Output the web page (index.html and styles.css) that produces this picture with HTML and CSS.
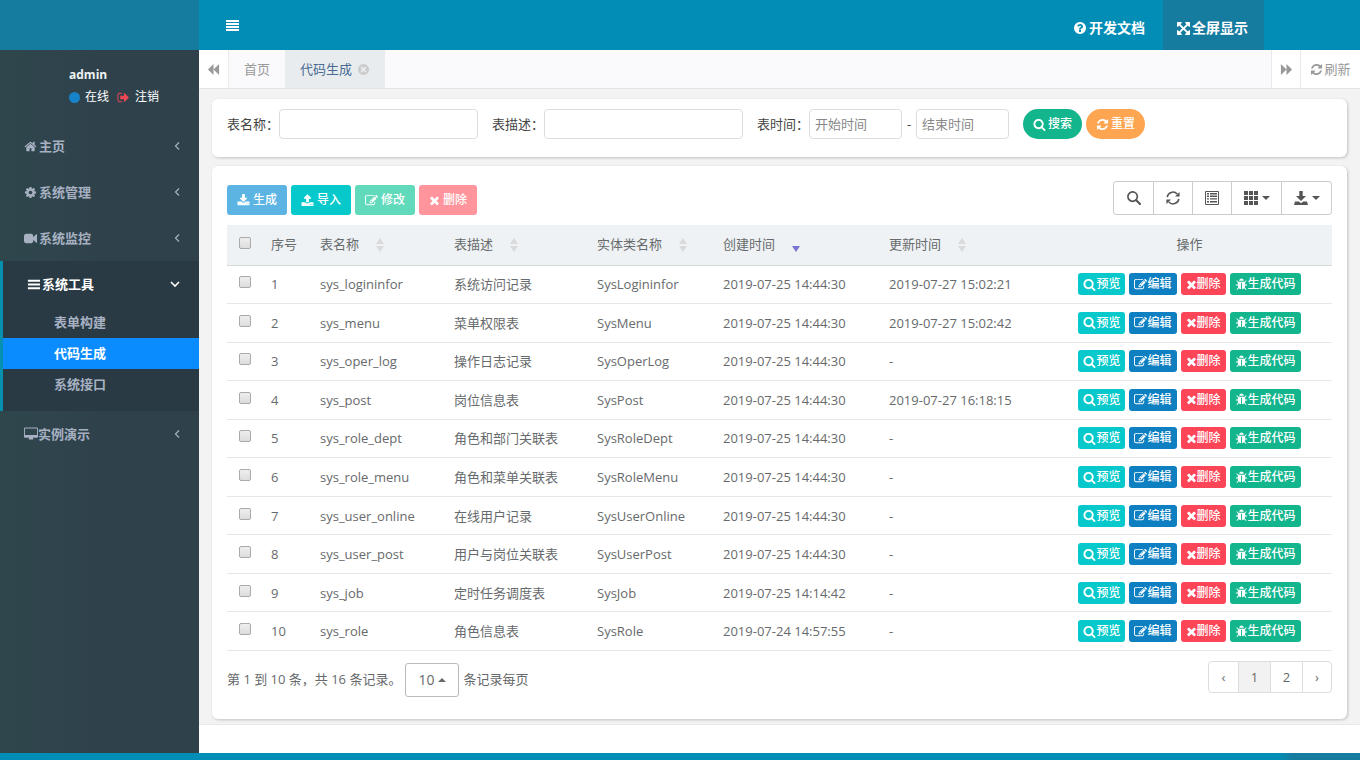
FILE: index.html
```
<!DOCTYPE html>
<html lang="zh-CN">
<head>
  <meta charset="UTF-8" />
  <meta name="viewport" content="width=device-width, initial-scale=1.0" />
  <title>代码生成</title>
  <link rel="stylesheet" href="styles.css">
</head>
<body>
  <!-- 图标 -->
  <svg class="sprite" aria-hidden="true">
    <symbol id="i-home" viewBox="0 0 1792 1792"><path d="M1472 992v480q0 26-19 45t-45 19h-384v-384h-256v384h-384q-26 0-45-19t-19-45v-480q0-1 .5-3t.5-3l575-474 575 474q1 2 1 6zm223-69l-62 74q-8 9-21 11h-3q-13 0-21-7l-692-577-692 577q-12 8-24 7-13-2-21-11l-62-74q-8-10-7-23.5t11-21.5l719-599q32-26 76-26t76 26l244 204v-195q0-14 9-23t23-9h192q14 0 23 9t9 23v408l219 182q10 8 11 21.5t-7 23.5z"/></symbol>
    <symbol id="i-gear" viewBox="0 0 1792 1792"><path d="M1152 896q0-106-75-181t-181-75-181 75-75 181 75 181 181 75 181-75 75-181zm512-109v222q0 12-8 23t-20 13l-185 28q-19 54-39 91 35 50 107 138 10 12 10 25t-9 23q-27 37-99 108t-94 71q-12 0-26-9l-138-108q-44 23-91 38-16 136-29 186-7 28-36 28h-222q-14 0-24.5-8.5t-11.5-21.5l-28-184q-49-16-90-37l-141 107q-10 9-25 9-14 0-25-11-126-114-165-168-7-10-7-23 0-12 8-23 15-21 51-66.5t54-70.5q-27-50-41-99l-183-27q-13-2-21-12.5t-8-23.5v-222q0-12 8-23t19-13l186-28q14-46 39-92-40-57-107-138-10-12-10-24 0-10 9-23 26-36 98.5-107.5t94.5-71.5q13 0 26 10l138 107q44-23 91-38 16-136 29-186 7-28 36-28h222q14 0 24.5 8.5t11.5 21.5l28 184q49 16 90 37l142-107q9-9 24-9 13 0 25 10 129 119 165 170 7 8 7 22 0 12-8 23-15 21-51 66.5t-54 70.5q26 50 41 98l183 28q13 2 21 12.5t8 23.5z"/></symbol>
    <symbol id="i-video" viewBox="0 0 1792 1792"><path d="M1792 352v1088q0 42-39 59-13 5-25 5-27 0-45-19l-403-403v166q0 119-84.5 203.5t-203.5 84.5h-704q-119 0-203.5-84.5t-84.5-203.5v-704q0-119 84.5-203.5t203.5-84.5h704q119 0 203.5 84.5t84.5 203.5v165l403-402q18-19 45-19 12 0 25 5 39 17 39 59z"/></symbol>
    <symbol id="i-bars" viewBox="0 0 14 14"><path d="M1 2h13v2H1zM1 6h13v2H1zM1 10h13v2H1z"/></symbol>
    <symbol id="i-align" viewBox="0 0 14 14"><path d="M1 2h13v2H1zM1 5h13v2H1zM1 8h13v2H1zM1 11h13v2H1z"/></symbol>
    <symbol id="i-desktop" viewBox="-64 0 1920 1792"><path d="M1728 992v-832q0-13-9.5-22.5t-22.5-9.5h-1600q-13 0-22.5 9.5t-9.5 22.5v832q0 13 9.5 22.5t22.5 9.5h1600q13 0 22.5-9.5t9.5-22.5zm128-832v1088q0 66-47 113t-113 47h-544q0 37 16 77.5t32 71 16 43.5q0 26-19 45t-45 19h-512q-26 0-45-19t-19-45q0-14 16-44t32-70 16-78h-544q-66 0-113-47t-47-113v-1088q0-66 47-113t113-47h1600q66 0 113 47t47 113z"/></symbol>
    <symbol id="i-search" viewBox="0 0 1792 1792"><path d="M1216 832q0-185-131.5-316.5t-316.5-131.5-316.5 131.5-131.5 316.5 131.5 316.5 316.5 131.5 316.5-131.5 131.5-316.5zm512 832q0 52-38 90t-90 38q-54 0-90-38l-343-342q-179 124-399 124-143 0-273.5-55.5t-225-150-150-225-55.5-273.5 55.5-273.5 150-225 225-150 273.5-55.5 273.5 55.5 225 150 150 225 55.5 273.5q0 220-124 399l343 343q37 37 37 90z"/></symbol>
    <symbol id="i-refresh" viewBox="0 0 1792 1792"><path d="M1639 1056q0 5-1 7-64 268-268 434.5t-478 166.5q-146 0-282.5-55t-243.5-157l-129 129q-19 19-45 19t-45-19-19-45v-448q0-26 19-45t45-19h448q26 0 45 19t19 45-19 45l-137 137q71 66 161 102t187 36q134 0 250-65t186-179q11-17 53-117 8-23 30-23h192q13 0 22.5 9.5t9.5 22.5zm25-800v448q0 26-19 45t-45 19h-448q-26 0-45-19t-19-45 19-45l138-138q-148-137-349-137-134 0-250 65t-186 179q-11 17-53 117-8 23-30 23h-199q-13 0-22.5-9.5t-9.5-22.5v-7q65-268 270-434.5t480-166.5q146 0 284 55.5t245 156.5l130-129q19-19 45-19t45 19 19 45z"/></symbol>
    <symbol id="i-edit" viewBox="0 0 1792 1792"><path d="M888 1184l116-116-152-152-116 116v56h96v96h56zm440-720q-16-16-33 1l-350 350q-17 17-1 33t33-1l350-350q17-17 1-33zm80 594v190q0 119-84.5 203.5t-203.5 84.5h-832q-119 0-203.5-84.5t-84.5-203.5v-832q0-119 84.5-203.5t203.5-84.5h832q63 0 117 25 15 7 18 23 3 17-9 29l-49 49q-14 14-32 8-23-6-45-6h-832q-66 0-113 47t-47 113v832q0 66 47 113t113 47h832q66 0 113-47t47-113v-126q0-13 9-22l64-64q15-15 35-7t20 29zm-96-738l288 288-672 672h-288v-288zm444 132l-92 92-288-288 92-92q28-28 68-28t68 28l152 152q28 28 28 68t-28 68z"/></symbol>
    <symbol id="i-times" viewBox="192 0 1408 1792"><path d="M1490 1322q0 40-28 68l-136 136q-28 28-68 28t-68-28l-294-294-294 294q-28 28-68 28t-68-28l-136-136q-28-28-28-68t28-68l294-294-294-294q-28-28-28-68t28-68l136-136q28-28 68-28t68 28l294 294 294-294q28-28 68-28t68 28l136 136q28 28 28 68t-28 68l-294 294 294 294q28 28 28 68z"/></symbol>
    <symbol id="i-bug" viewBox="0 0 1792 1792"><path d="M1696 960q0 26-19 45t-45 19h-224q0 171-67 290l208 209q19 19 19 45t-19 45q-18 19-45 19t-45-19l-198-197q-5 5-15 13t-42 28.5-65 36.5-82 29-97 13v-896h-128v896q-51 0-101.5-13.5t-87-33-66-39-43.5-32.5l-15-14-183 207q-20 21-48 21-24 0-43-16-19-18-20.5-44.5t15.5-46.5l202-227q-58-114-58-274h-224q-26 0-45-19t-19-45 19-45 45-19h224v-294l-173-173q-19-19-19-45t19-45 45-19 45 19l173 173h844l173-173q19-19 45-19t45 19 19 45-19 45l-173 173v294h224q26 0 45 19t19 45zm-480-576h-640q0-133 93.5-226.5t226.5-93.5 226.5 93.5 93.5 226.5z"/></symbol>
    <symbol id="i-download" viewBox="0 0 1792 1792"><path d="M1344 1344q0-26-19-45t-45-19-45 19-19 45 19 45 45 19 45-19 19-45zm256 0q0-26-19-45t-45-19-45 19-19 45 19 45 45 19 45-19 19-45zm128-224v320q0 40-28 68t-68 28h-1472q-40 0-68-28t-28-68v-320q0-40 28-68t68-28h465l135 136q58 56 136 56t136-56l136-136h464q40 0 68 28t28 68zm-325-569q17 41-14 70l-448 448q-18 19-45 19t-45-19l-448-448q-31-29-14-70 17-39 59-39h256v-448q0-26 19-45t45-19h256q26 0 45 19t19 45v448h256q42 0 59 39z"/></symbol>
    <symbol id="i-upload" viewBox="0 0 1792 1792"><path d="M1344 1472q0-26-19-45t-45-19-45 19-19 45 19 45 45 19 45-19 19-45zm256 0q0-26-19-45t-45-19-45 19-19 45 19 45 45 19 45-19 19-45zm128-224v320q0 40-28 68t-68 28h-1472q-40 0-68-28t-28-68v-320q0-40 28-68t68-28h427q21 56 70.5 92t110.5 36h256q61 0 110.5-36t70.5-92h427q40 0 68 28t28 68zm-325-648q-17 40-59 40h-256v448q0 26-19 45t-45 19h-256q-26 0-45-19t-19-45v-448h-256q-42 0-59-40-17-39 14-69l448-448q18-19 45-19t45 19l448 448q31 30 14 69z"/></symbol>
    <symbol id="i-question" viewBox="0 0 1792 1792"><path d="M1024 1376v-192q0-14-9-23t-23-9h-192q-14 0-23 9t-9 23v192q0 14 9 23t23 9h192q14 0 23-9t9-23zm256-672q0-88-55.5-163t-138.5-116-170-41q-243 0-371 213-15 24 8 42l132 100q7 6 19 6 16 0 25-12 53-68 86-92 34-24 86-24 48 0 85.5 26t37.5 59q0 38-20 61t-68 45q-63 28-115.5 86.5t-52.5 125.5v36q0 14 9 23t23 9h192q14 0 23-9t9-23q0-19 21.5-49.5t54.5-49.5q32-18 49-28.5t46-35 44.5-48 28-60.5 12.5-81zm384 192q0 209-103 385.5t-279.5 279.5-385.5 103-385.5-103-279.5-279.5-103-385.5 103-385.5 279.5-279.5 385.5-103 385.5 103 279.5 279.5 103 385.5z"/></symbol>
    <symbol id="i-close" viewBox="0 0 1792 1792"><path d="M1277 1122q0-26-19-45l-181-181 181-181q19-19 19-45 0-27-19-46l-90-90q-19-19-46-19-26 0-45 19l-181 181-181-181q-19-19-45-19-27 0-46 19l-90 90q-19 19-19 46 0 26 19 45l181 181-181 181q-19 19-19 45 0 27 19 46l90 90q19 19 46 19 26 0 45-19l181-181 181 181q19 19 45 19 27 0 46-19l90-90q19-19 19-46zm387-226q0 209-103 385.5t-279.5 279.5-385.5 103-385.5-103-279.5-279.5-103-385.5 103-385.5 279.5-279.5 385.5-103 385.5 103 279.5 279.5 103 385.5z"/></symbol>
    <symbol id="i-arrows" viewBox="128 128 1536 1536"><path d="M1411 541l-355 355 355 355 144-144q29-31 70-14 39 17 39 59v448q0 26-19 45t-45 19h-448q-42 0-59-40-17-39 14-69l144-144-355-355-355 355 144 144q31 30 14 69-17 40-59 40h-448q-26 0-45-19t-19-45v-448q0-42 40-59 39-17 69 14l144 144 355-355-355-355-144 144q-19 19-45 19-12 0-24-5-40-17-40-59v-448q0-26 19-45t45-19h448q42 0 59 40 17 39-14 69l-144 144 355 355 355-355-144-144q-31-30-14-69 17-40 59-40h448q26 0 45 19t19 45v448q0 42-39 59-13 5-25 5-26 0-45-19z"/></symbol>
    <symbol id="i-signout" viewBox="0 0 1792 1792"><path d="M704 1440q0 4 1 20t.5 26.5-3 23.5-10 19.5-20.5 6.5h-320q-119 0-203.5-84.5t-84.5-203.5v-704q0-119 84.5-203.5t203.5-84.5h320q13 0 22.5 9.5t9.5 22.5q0 4 1 20t.5 26.5-3 23.5-10 19.5-20.5 6.5h-320q-66 0-113 47t-47 113v704q0 66 47 113t113 47h312l11.5 1 11.5 3 8 5.5 7 9 2 13.5zm928-544q0 26-19 45l-544 544q-19 19-45 19t-45-19-19-45v-288h-448q-26 0-45-19t-19-45v-384q0-26 19-45t45-19h448v-288q0-26 19-45t45-19 45 19l544 544q19 19 19 45z"/></symbol>
    <symbol id="i-backward" viewBox="0 0 14 14"><path d="M1 7l6-6v12zM7 7l6-6v12z"/></symbol>
    <symbol id="i-forward" viewBox="0 0 14 14"><path d="M1 1l6 6-6 6zM7 1l6 6-6 6z"/></symbol>
    <symbol id="i-left" viewBox="0 0 14 14"><path d="M9 3.5L5.500 7 9 10.500" fill="none" stroke="currentColor" stroke-width="1.2"/></symbol>
    <symbol id="i-down" viewBox="0 0 14 14"><path d="M3 5l4 4 4-4" fill="none" stroke="currentColor" stroke-width="1.6"/></symbol>
    <symbol id="i-glass" viewBox="0 0 14 14"><circle cx="5.6" cy="5.6" r="4.700" fill="none" stroke="currentColor" stroke-width="1.7"/><path d="M9 9l4 4" stroke="currentColor" stroke-width="2.2" stroke-linecap="round"/></symbol>
    <symbol id="i-repeat" viewBox="0 0 14 14"><path d="M1.200 6.2A5.8 5.8 0 0 1 11.200 3M12.800 7.8A5.8 5.8 0 0 1 2.800 11" fill="none" stroke="currentColor" stroke-width="1.5"/><path d="M13.600 1v4.500H9zM.4 13V8.500H5z"/></symbol>
    <symbol id="i-list" viewBox="0 0 14 14"><path d="M.5.5h13v13H.5z" fill="none" stroke="currentColor"/><path d="M2 2h2v1.4H2zM5 2h7v1.4H5zM2 4.6h2V6H2zM5 4.6h7V6H5zM2 7.2h2v1.4H2zM5 7.2h7v1.4H5zM2 10h2v1.4H2zM5 10h7v1.4H5z"/></symbol>
    <symbol id="i-th" viewBox="0 0 14 14"><path d="M0 0h4v4H0zM5 0h4v4H5zM10 0h4v4h-4zM0 5h4v4H0zM5 5h4v4H5zM10 5h4v4h-4zM0 10h4v4H0zM5 10h4v4H5zM10 10h4v4h-4z"/></symbol>
    <symbol id="i-export" viewBox="0 0 14 14"><path d="M5.3 0h3.4v5H12L7 10 2 5h3.3zM1 10.5h3.8L7 12.2l2.200-1.7H13L14 14H0z"/></symbol>
  </svg>

  <div class="page">
    <aside class="sidebar">
      <div class="logo"></div>
      <div class="user">
        <strong>admin</strong>
        <div class="user-links">
          <a href="#"><span class="dot"></span>在线</a>
          <a href="#"><svg class="icon red"><use href="#i-signout"/></svg>注销</a>
        </div>
      </div>
      <nav class="menu">
        <a href="#" class="menu-item"><svg class="icon"><use href="#i-home"/></svg><span>主页</span><svg class="icon arrow"><use href="#i-left"/></svg></a>
        <a href="#" class="menu-item"><svg class="icon"><use href="#i-gear"/></svg><span>系统管理</span><svg class="icon arrow"><use href="#i-left"/></svg></a>
        <a href="#" class="menu-item"><svg class="icon"><use href="#i-video"/></svg><span>系统监控</span><svg class="icon arrow"><use href="#i-left"/></svg></a>
        <div class="menu-group">
          <a href="#" class="menu-item"><svg class="icon"><use href="#i-bars"/></svg><span>系统工具</span><svg class="icon arrow"><use href="#i-down"/></svg></a>
          <a href="#" class="sub-item">表单构建</a>
          <a href="#" class="sub-item selected">代码生成</a>
          <a href="#" class="sub-item">系统接口</a>
        </div>
        <a href="#" class="menu-item tight"><svg class="icon"><use href="#i-desktop"/></svg><span>实例演示</span><svg class="icon arrow"><use href="#i-left"/></svg></a>
      </nav>
    </aside>

    <div class="main">
      <header class="header">
        <button class="toggle" aria-label="菜单"><svg class="icon"><use href="#i-align"/></svg></button>
        <div class="header-links">
          <a href="#"><svg class="icon"><use href="#i-question"/></svg>开发文档</a>
          <a href="#" class="hover"><svg class="icon"><use href="#i-arrows"/></svg>全屏显示</a>
        </div>
      </header>

      <div class="tabs">
        <button class="tab-btn" aria-label="向左"><svg class="icon"><use href="#i-backward"/></svg></button>
        <a href="#" class="tab">首页</a>
        <a href="#" class="tab active">代码生成<svg class="icon"><use href="#i-close"/></svg></a>
        <button class="tab-btn last" aria-label="向右"><svg class="icon"><use href="#i-forward"/></svg></button>
        <button class="tab-btn refresh"><svg class="icon"><use href="#i-refresh"/></svg>刷新</button>
      </div>

      <div class="content">
        <form class="card search">
          <div class="field"><label for="tableName">表名称：</label><input id="tableName" type="text"></div>
          <div class="field"><label for="tableComment">表描述：</label><input id="tableComment" type="text"></div>
          <div class="field">
            <label for="startTime">表时间：</label><input id="startTime" class="date" type="text" placeholder="开始时间">
            <span class="dash">-</span>
            <input class="date" type="text" placeholder="结束时间" aria-label="结束时间">
          </div>
          <div class="buttons">
            <button type="button" class="btn round green"><svg class="icon"><use href="#i-search"/></svg>搜索</button>
            <button type="button" class="btn round orange"><svg class="icon"><use href="#i-refresh"/></svg>重置</button>
          </div>
        </form>

        <div class="card list">
          <div class="toolbar">
            <div class="buttons">
              <button class="btn sky"><svg class="icon"><use href="#i-download"/></svg>生成</button>
              <button class="btn cyan"><svg class="icon"><use href="#i-upload"/></svg>导入</button>
              <button class="btn mint"><svg class="icon"><use href="#i-edit"/></svg>修改</button>
              <button class="btn pink"><svg class="icon narrow"><use href="#i-times"/></svg>删除</button>
            </div>
            <div class="tools">
              <button aria-label="搜索"><svg class="icon"><use href="#i-glass"/></svg></button>
              <button aria-label="刷新"><svg class="icon"><use href="#i-repeat"/></svg></button>
              <button aria-label="切换"><svg class="icon"><use href="#i-list"/></svg></button>
              <button aria-label="列" class="drop"><svg class="icon"><use href="#i-th"/></svg><span class="caret"></span></button>
              <button aria-label="导出" class="drop"><svg class="icon"><use href="#i-export"/></svg><span class="caret"></span></button>
            </div>
          </div>

          <table>
            <colgroup>
              <col class="c-check"><col class="c-no"><col class="c-name"><col class="c-desc">
              <col class="c-entity"><col class="c-time"><col class="c-time"><col class="c-ops">
            </colgroup>
            <thead>
              <tr>
                <th class="check"><input type="checkbox" aria-label="全选"></th>
                <th>序号</th>
                <th>表名称<span class="sort"></span></th>
                <th>表描述<span class="sort"></span></th>
                <th>实体类名称<span class="sort"></span></th>
                <th>创建时间<span class="sort desc"></span></th>
                <th>更新时间<span class="sort"></span></th>
                <th class="ops">操作</th>
              </tr>
            </thead>
            <tbody id="rows"></tbody>
          </table>

          <div class="pager">
            <span>第 1 到 10 条，共 16 条记录。</span>
            <button class="page-size">10<span class="caret up"></span></button>
            <span>条记录每页</span>
            <div class="pages">
              <a href="#">‹</a>
              <a href="#" class="num current">1</a>
              <a href="#" class="num">2</a>
              <a href="#">›</a>
            </div>
          </div>
        </div>
      </div>
      <footer class="footer"></footer>
    </div>
  </div>
  <div class="bottom-bar"></div>

  <script>
    const tables = [
      ["sys_logininfor", "系统访问记录", "SysLogininfor", "2019-07-25 14:44:30", "2019-07-27 15:02:21"],
      ["sys_menu", "菜单权限表", "SysMenu", "2019-07-25 14:44:30", "2019-07-27 15:02:42"],
      ["sys_oper_log", "操作日志记录", "SysOperLog", "2019-07-25 14:44:30", "-"],
      ["sys_post", "岗位信息表", "SysPost", "2019-07-25 14:44:30", "2019-07-27 16:18:15"],
      ["sys_role_dept", "角色和部门关联表", "SysRoleDept", "2019-07-25 14:44:30", "-"],
      ["sys_role_menu", "角色和菜单关联表", "SysRoleMenu", "2019-07-25 14:44:30", "-"],
      ["sys_user_online", "在线用户记录", "SysUserOnline", "2019-07-25 14:44:30", "-"],
      ["sys_user_post", "用户与岗位关联表", "SysUserPost", "2019-07-25 14:44:30", "-"],
      ["sys_job", "定时任务调度表", "SysJob", "2019-07-25 14:14:42", "-"],
      ["sys_role", "角色信息表", "SysRole", "2019-07-24 14:57:55", "-"]
    ];

    const actions = [
      ["cyan", "search", "预览"],
      ["blue", "edit", "编辑"],
      ["red-bg", "times", "删除"],
      ["green", "bug", "生成代码"]
    ];

    const ops = actions.map(([color, icon, text]) =>
      `<button class="btn xs ${color}"><svg class="icon ${icon === "times" ? "narrow" : ""}"><use href="#i-${icon}"/></svg>${text}</button>`
    ).join("");

    document.getElementById("rows").innerHTML = tables.map((t, i) => `
      <tr>
        <td class="check"><input type="checkbox" aria-label="${t[0]}"></td>
        <td>${i + 1}</td>
        ${t.map(v => `<td>${v}</td>`).join("")}
        <td class="ops"><div class="row-buttons">${ops}</div></td>
      </tr>`).join("");
  </script>
</body>
</html>
```

FILE: styles.css
```
* {
  box-sizing: border-box;
}

body {
  margin: 0;
  min-height: 100vh;
  display: flex;
  flex-direction: column;
  font-family: "Open Sans", "Noto Sans CJK SC", sans-serif;
  font-size: 13px;
  line-height: 18px;
  color: #676a6c;
  background: #f3f3f4;
}

a {
  color: inherit;
  text-decoration: none;
}

button,
input {
  font-family: inherit;
  font-size: inherit;
  line-height: inherit;
  color: inherit;
}

button {
  margin: 0;
  padding: 0;
  border: none;
  background: none;
  cursor: pointer;
}

.sprite {
  display: none;
}

.icon {
  width: 13px;
  height: 13px;
  flex: none;
  fill: currentColor;
}

.page {
  flex: 1;
  display: flex;
}

/* 左侧菜单 */
.sidebar {
  width: 199px;
  flex: none;
  background: linear-gradient(to right, #2f464c, #2f424c 50%);
  color: #a7b1c2;
}

.logo {
  height: 50px;
  background: #167c9f;
}

.user {
  height: 73px;
  padding: 16px 0 0 69px;
  color: #fff;
}

.user strong {
  display: block;
  font-size: 12px;
  color: #eef2f3;
}

.user-links {
  display: flex;
  gap: 8px;
  margin-top: 4px;
  font-size: 12px;
}

.user-links a {
  display: flex;
  align-items: center;
  gap: 5px;
}

.dot {
  width: 11px;
  height: 11px;
  border-radius: 50%;
  background: #1682c8;
}

.red {
  color: #ed4655;
}

.menu-item {
  display: flex;
  align-items: center;
  gap: 2px;
  height: 46px;
  padding: 0 15px 0 24px;
  font-weight: 600;
}

.menu-item span {
  flex: 1;
}

.menu-item .arrow {
  width: 14px;
  height: 14px;
}

.menu-item.tight {
  gap: 0;
}

.menu-item.tight .icon:first-child {
  width: 14px;
  height: 14px;
}

.menu-group {
  padding-bottom: 11px;
  border-left: 3px solid #0590b0;
  background: #293a44;
}

.menu-group .menu-item {
  padding-right: 17px;
  color: #fff;
}

.sub-item {
  display: block;
  height: 31px;
  padding-left: 51px;
  line-height: 31px;
  font-weight: 600;
}

.sub-item.selected {
  background: #0a8cff;
  color: #fff;
}

/* 顶部 */
.main {
  flex: 1;
  min-width: 0;
  display: flex;
  flex-direction: column;
}

.header {
  display: flex;
  justify-content: space-between;
  height: 50px;
  padding-right: 96px;
  background: #028db7;
  color: #fff;
}

.toggle {
  padding: 4px 26px 0;
}

.toggle .icon {
  width: 14px;
  height: 14px;
}

.header-links {
  display: flex;
  font-size: 14px;
  font-weight: bold;
}

.header-links a {
  display: flex;
  align-items: center;
  gap: 2px;
  padding: 6px 18px 0 14px;
}

.header-links .icon {
  width: 14px;
  height: 14px;
}

.header-links .hover {
  padding-right: 16px;
  background: #167c9f;
}

.header-links .hover .icon {
  width: 13px;
  height: 13px;
}

.tabs {
  display: flex;
  height: 39px;
  border-bottom: 1px solid #e4e4e6;
  background: #fafafc;
  color: #999;
}

.tab-btn {
  width: 30px;
  display: flex;
  align-items: center;
  justify-content: center;
  gap: 1px;
  border-right: 1px solid #e9e9ec;
  background: #fff;
}

.tab-btn.last {
  margin-left: auto;
  border-left: 1px solid #e9e9ec;
}

.tab-btn.refresh {
  width: 59px;
  border-right: none;
}

.tab {
  display: flex;
  align-items: center;
  gap: 5px;
  padding: 0 15px;
}

.tab.active {
  background: #e8ecee;
  color: #4a6a92;
}

.tab.active .icon {
  color: #ccc;
}

/* 内容 */
.content {
  flex: 1;
  padding: 10px 13px 5px;
}

.card {
  border-radius: 6px;
  background: #fff;
  box-shadow: 1px 1px 3px rgba(0, 0, 0, 0.2);
}

.search {
  display: flex;
  align-items: flex-start;
  gap: 14px;
  height: 58px;
  margin-bottom: 9px;
  padding: 10px 15px;
}

.field {
  display: flex;
  align-items: center;
  color: #444;
}

.field input {
  width: 199px;
  height: 30px;
  padding: 0 5px;
  border: 1px solid #ddd;
  border-radius: 4px;
  background: #fff;
}

.field .date {
  width: 93px;
}

.field input::placeholder {
  color: #888;
}

.dash {
  width: 14px;
  text-align: center;
}

.buttons {
  display: flex;
  gap: 4px;
}

.btn {
  display: flex;
  align-items: center;
  gap: 2px;
  height: 30px;
  padding: 0 10px;
  border-radius: 3px;
  font-size: 12px;
  font-weight: 500;
  color: #fff;
}

.btn .narrow {
  width: 11px;
}

.btn.round {
  border-radius: 15px;
}

.btn.xs {
  gap: 0;
  height: 22px;
  padding: 0 5px;
}

.green { background: #13b58d; }
.orange { background: #fda551; }
.sky { background: #5cb4e3; }
.cyan { background: #07c9cb; }
.mint { background: #60dabb; }
.pink { background: #ff949c; }
.blue { background: #0e7fc0; }
.red-bg { background: #fd4558; }

.list {
  min-height: 553px;
  padding: 15px;
}

.toolbar {
  display: flex;
  align-items: center;
  justify-content: space-between;
  margin-bottom: 10px;
}

.toolbar .buttons {
  padding-top: 4px;
}

.toolbar .btn {
  gap: 3px;
}

.tools {
  display: flex;
  height: 34px;
  border: 1px solid #ccc;
  border-radius: 3px;
  color: #555;
}

.tools button {
  display: flex;
  align-items: center;
  justify-content: center;
  gap: 4px;
  width: 39px;
}

.tools .drop {
  width: 50px;
}

.tools button + button {
  border-left: 1px solid #ccc;
}

.tools .icon {
  width: 14px;
  height: 14px;
}

.caret {
  border: 4px solid transparent;
  border-top-color: currentColor;
  border-bottom: none;
}

.caret.up {
  border-top: none;
  border-bottom: 4px solid currentColor;
}

/* 表格 */
table {
  width: 100%;
  height: 426px;
  table-layout: fixed;
  border-collapse: collapse;
}

.c-check { width: 36px; }
.c-no { width: 49px; }
.c-name { width: 134px; }
.c-desc { width: 143px; }
.c-entity { width: 126px; }
.c-time { width: 166px; }
.c-ops { width: 285px; }

th,
td {
  padding: 0 8px;
  border-bottom: 1px solid #e7e7ea;
  text-align: left;
  white-space: nowrap;
}

th {
  height: 40px;
  padding-bottom: 2px;
  border-bottom-color: #d5dadb;
  background: #eff2f4;
  font-weight: 400;
}

.check {
  padding: 0 0 4px;
  text-align: center;
}

.check input {
  appearance: none;
  display: block;
  width: 12px;
  height: 12px;
  margin: 0 auto;
  border: 1px solid #aaa;
  border-radius: 2px;
  background: linear-gradient(#eee, #ddd);
}

.ops {
  text-align: center;
}

.row-buttons {
  display: flex;
  justify-content: center;
  gap: 4px;
}

.sort {
  display: inline-flex;
  flex-direction: column;
  gap: 2px;
  margin-left: 17px;
  vertical-align: middle;
}

.sort::before,
.sort::after {
  content: "";
  border: 4px solid transparent;
}

.sort::before {
  border-top: none;
  border-bottom: 6px solid #d8dadb;
}

.sort::after {
  border-bottom: none;
  border-top: 6px solid #d8dadb;
}

.sort.desc::before {
  visibility: hidden;
}

.sort.desc::after {
  border-top-color: #7a74d2;
}

/* 分页 */
.pager {
  display: flex;
  align-items: center;
  padding-top: 10px;
}

.page-size {
  display: flex;
  align-items: center;
  justify-content: center;
  gap: 4px;
  width: 54px;
  height: 34px;
  margin: 2px 4px 0;
  border: 1px solid #bbb;
  border-radius: 3px;
  font-size: 14px;
}

.pages {
  display: flex;
  height: 32px;
  margin-left: auto;
  margin-bottom: 4px;
  border: 1px solid #ddd;
  border-radius: 4px;
  line-height: 30px;
  text-align: center;
}

.pages a {
  width: 29px;
}

.pages .num {
  width: 32px;
}

.pages a + a {
  border-left: 1px solid #ddd;
}

.pages .current {
  background: #f3f2f3;
}

.footer {
  height: 29px;
  border-top: 1px solid #e7eaec;
  background: #fff;
}

.bottom-bar {
  height: 7px;
  background: linear-gradient(to right, #028db7 94%, #167c9f 95%);
}
```
